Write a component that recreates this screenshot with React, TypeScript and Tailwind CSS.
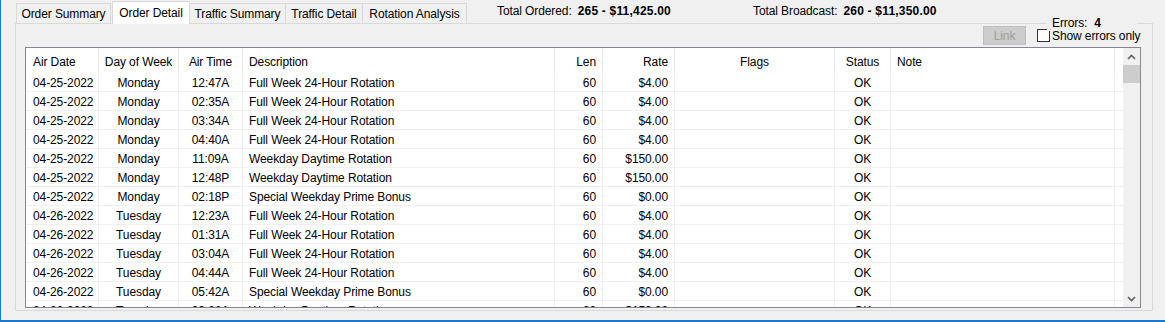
import React from 'react';

type Row = [string, string, string, string, string, string, string];

const rows: Row[] = [
  ['04-25-2022', 'Monday', '12:47A', 'Full Week 24-Hour Rotation', '60', '$4.00', 'OK'],
  ['04-25-2022', 'Monday', '02:35A', 'Full Week 24-Hour Rotation', '60', '$4.00', 'OK'],
  ['04-25-2022', 'Monday', '03:34A', 'Full Week 24-Hour Rotation', '60', '$4.00', 'OK'],
  ['04-25-2022', 'Monday', '04:40A', 'Full Week 24-Hour Rotation', '60', '$4.00', 'OK'],
  ['04-25-2022', 'Monday', '11:09A', 'Weekday Daytime Rotation', '60', '$150.00', 'OK'],
  ['04-25-2022', 'Monday', '12:48P', 'Weekday Daytime Rotation', '60', '$150.00', 'OK'],
  ['04-25-2022', 'Monday', '02:18P', 'Special Weekday Prime Bonus', '60', '$0.00', 'OK'],
  ['04-26-2022', 'Tuesday', '12:23A', 'Full Week 24-Hour Rotation', '60', '$4.00', 'OK'],
  ['04-26-2022', 'Tuesday', '01:31A', 'Full Week 24-Hour Rotation', '60', '$4.00', 'OK'],
  ['04-26-2022', 'Tuesday', '03:04A', 'Full Week 24-Hour Rotation', '60', '$4.00', 'OK'],
  ['04-26-2022', 'Tuesday', '04:44A', 'Full Week 24-Hour Rotation', '60', '$4.00', 'OK'],
  ['04-26-2022', 'Tuesday', '05:42A', 'Special Weekday Prime Bonus', '60', '$0.00', 'OK'],
  ['04-26-2022', 'Tuesday', '09:06A', 'Weekday Daytime Rotation', '60', '$150.00', 'OK'],
];

// ширина и выравнивание колонок
const cols = [
  { label: 'Air Date', cls: 'w-[73px] justify-start pl-[7px]' },
  { label: 'Day of Week', cls: 'w-[80px] justify-center' },
  { label: 'Air Time', cls: 'w-[64px] justify-center' },
  { label: 'Description', cls: 'w-[312px] justify-start pl-[6px]' },
  { label: 'Len', cls: 'w-[48px] justify-end pr-[6px]' },
  { label: 'Rate', cls: 'w-[72px] justify-end pr-[6px]' },
  { label: 'Flags', cls: 'w-[160px] justify-center' },
  { label: 'Status', cls: 'w-[56px] justify-center' },
  { label: 'Note', cls: 'w-[224px] justify-start pl-[6px]' },
];

const tabs = [
  { label: 'Order Summary', cls: 'w-[95px] border-l' },
  { label: 'Order Detail', cls: 'w-[78px]', active: true },
  { label: 'Traffic Summary', cls: 'w-[96px]' },
  { label: 'Traffic Detail', cls: 'w-[77px]' },
  { label: 'Rotation Analysis', cls: 'w-[104px]' },
];

function Chevron({ down }: { down?: boolean }) {
  return (
    <svg width="9" height="6" viewBox="0 0 9 6" className={down ? 'rotate-180' : ''}>
      <path d="M1 5 L4.5 1.5 L8 5" fill="none" stroke="#606060" strokeWidth="1.6" />
    </svg>
  );
}

export default function App() {
  return (
    <div
      className="relative h-[322px] w-[1165px] overflow-hidden border-b-2 border-l border-[#1b78cf] bg-[#f0f0f0] text-[12px] tracking-[-0.1px] text-black"
      style={{ fontFamily: '"Liberation Sans", Arial, sans-serif' }}
    >
      {/* вкладки и итоги */}
      <div className="flex h-[23px] items-end">
        <div className="ml-[15px] flex items-end">
          {tabs.map((t) =>
            t.active ? (
              <div
                key={t.label}
                className={`relative z-10 mb-[-1px] ml-[1px] flex h-[23px] items-center justify-center border-x border-t border-[#d9d9d9] bg-white pb-[1px] ${t.cls}`}
              >
                {t.label}
              </div>
            ) : (
              <div
                key={t.label}
                className={`flex h-[20px] items-center justify-center border-r border-t border-[#d9d9d9] pt-[1px] ${t.cls}`}
              >
                {t.label}
              </div>
            )
          )}
        </div>
        <div className="ml-[30px] flex h-[23px] w-[256px] items-center pb-[1px]">
          Total Ordered:<span className="ml-[6px] font-bold tracking-[0.2px]">265 - $11,425.00</span>
        </div>
        <div className="flex h-[23px] items-center pb-[1px]">
          Total Broadcast:<span className="ml-[6px] font-bold tracking-[0.2px]">260 - $11,350.00</span>
        </div>
      </div>

      {/* подпись группы поверх рамки */}
      <div className="absolute left-[1046px] top-[15px] z-20 flex h-[16px] w-[90px] items-center bg-[#f0f0f0] pl-[5px]">
        Errors:<span className="ml-[7px] font-bold">4</span>
      </div>

      {/* панель вкладки */}
      <div className="ml-[14px] flex h-[288px] w-[1138px] flex-col border border-[#d9d9d9] pb-[2px] pl-[9px] pr-[11px]">
        <div className="flex h-[23px] shrink-0 items-center justify-end">
          <div className="flex h-[19px] w-[43px] items-center justify-center border border-[#bfbfbf] bg-[#cccccc] text-[#a0a0a0]">
            Link
          </div>
          <div className="ml-[11px] flex w-[104px] items-center">
            <div className="h-[13px] w-[13px] border border-[#333333] bg-white" />
            <span className="ml-[2px] whitespace-nowrap">Show errors only</span>
          </div>
        </div>

        {/* таблица */}
        <div className="flex h-[261px] border border-[#828790] bg-white">
          <div className="flex min-w-0 flex-1 flex-col overflow-hidden">
            <div className="flex h-[25px] shrink-0">
              {cols.map((c) => (
                <div key={c.label} className={`flex shrink-0 items-center border-r border-[#e5e5e5] pt-[2px] ${c.cls}`}>
                  {c.label}
                </div>
              ))}
              <div className="flex-1" />
            </div>
            {rows.map((r, i) => (
              <div key={i} className="flex h-[19px] shrink-0 border-b border-[#f0f0f0]">
                {cols.map((c, j) => (
                  <div key={j} className={`flex shrink-0 items-center whitespace-nowrap border-r border-[#f0f0f0] pt-[2px] ${c.cls}`}>
                    {j === 6 ? '' : j === 7 ? r[6] : j === 8 ? '' : r[j]}
                  </div>
                ))}
                <div className="flex-1" />
              </div>
            ))}
          </div>
          <div className="flex w-[17px] shrink-0 flex-col bg-[#f0f0f0]">
            <div className="flex h-[17px] items-center justify-center">
              <Chevron />
            </div>
            <div className="h-[18px] bg-[#cdcdcd]" />
            <div className="flex-1" />
            <div className="flex h-[17px] items-center justify-center">
              <Chevron down />
            </div>
          </div>
        </div>
      </div>
    </div>
  );
}
